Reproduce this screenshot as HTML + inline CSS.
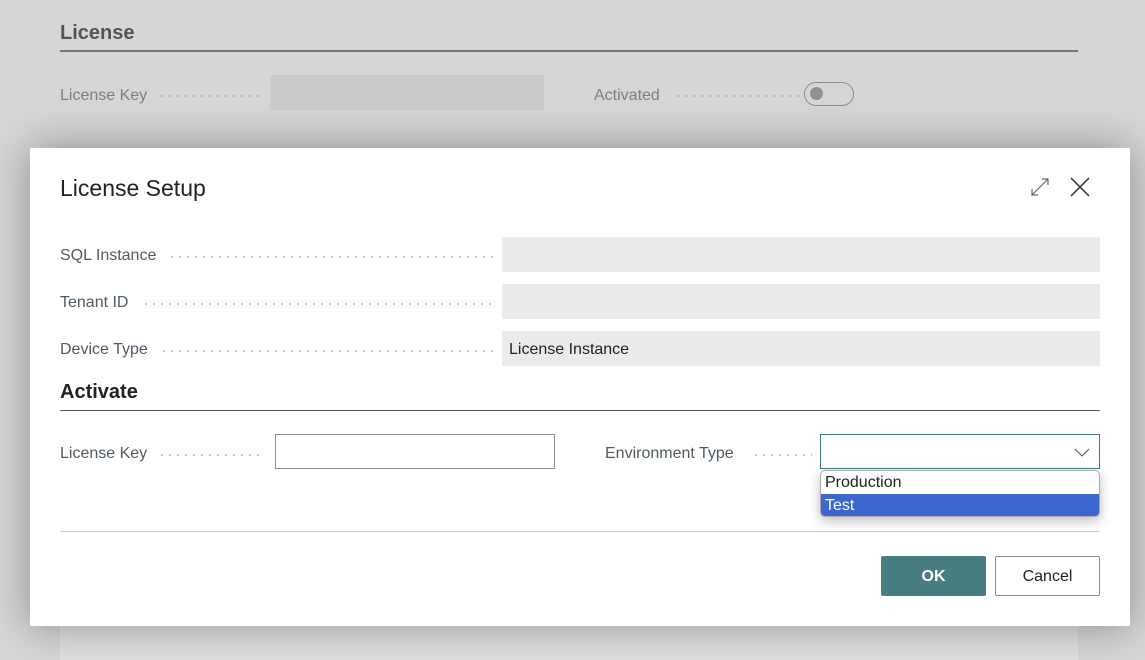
<!DOCTYPE html>
<html><head><style>
*{margin:0;padding:0;box-sizing:border-box}
body{width:1145px;height:660px;background:#d6d6d6;font-family:"Liberation Sans",sans-serif;position:relative;overflow:hidden}
.a{position:absolute}
.lbl{position:absolute;font-size:16px;color:#505a66;white-space:nowrap}
.dots{position:absolute;height:2px;background-image:radial-gradient(circle,#b8bcc2 0.9px,transparent 1.1px);background-size:8px 2px}
.bgl{color:#7a7f86}
.bgdots{background-image:radial-gradient(circle,#a9adb2 0.9px,transparent 1.1px)}
.field{position:absolute;background:#ebebec;height:35px;font-size:16px;color:#222;padding:10px 7px}
</style></head><body>
<div class="a" style="left:60px;top:626px;width:1018px;height:34px;background:#e0e0e0"></div>
<div class="a" style="left:60px;top:22px;font-size:20px;color:#50555c;font-weight:bold">License</div>
<div class="a" style="left:60px;top:50px;width:1018px;height:2px;background:#767880"></div>
<div class="lbl bgl" style="left:60px;top:87px">License Key</div>
<div class="dots bgdots" style="left:158px;top:95px;width:106px"></div>
<div class="a" style="left:270px;top:75px;width:274px;height:35px;background:#cbcbcb"></div>
<div class="lbl bgl" style="left:594px;top:87px">Activated</div>
<div class="dots bgdots" style="left:674px;top:95px;width:126px"></div>
<div class="a" style="left:804px;top:82px;width:50px;height:24px;border:1px solid #8a8d92;border-radius:12px"></div>
<div class="a" style="left:810px;top:87px;width:13px;height:13px;border-radius:50%;background:#8e9196"></div>

<div class="a" style="left:30px;top:148px;width:1100px;height:478px;background:#fff;box-shadow:0 0 40px rgba(0,0,0,.35)"></div>
<div class="a" style="left:60px;top:175px;font-size:23px;color:#222">License Setup</div>
<svg class="a" style="left:1028px;top:175px" width="24" height="24" viewBox="0 0 24 24"><path d="M4 20L20 4M14 4h6v6M4 14v6h6" fill="none" stroke="#666" stroke-width="1.2"/></svg>
<svg class="a" style="left:1068px;top:175px" width="24" height="24" viewBox="0 0 24 24"><path d="M3 3L21 21M21 3L3 21" fill="none" stroke="#444" stroke-width="1.6"/></svg>

<div class="lbl" style="left:60px;top:247px">SQL Instance</div>
<div class="dots" style="left:168px;top:256px;width:326px"></div>
<div class="field" style="left:502px;top:237px;width:598px"></div>
<div class="lbl" style="left:60px;top:294px">Tenant ID</div>
<div class="dots" style="left:142px;top:303px;width:352px"></div>
<div class="field" style="left:502px;top:284px;width:598px"></div>
<div class="lbl" style="left:60px;top:341px">Device Type</div>
<div class="dots" style="left:160px;top:350px;width:334px"></div>
<div class="field" style="left:502px;top:331px;width:598px">License Instance</div>

<div class="a" style="left:60px;top:381px;font-size:20px;font-weight:bold;color:#222">Activate</div>
<div class="a" style="left:60px;top:410px;width:1040px;height:1px;background:#555"></div>

<div class="lbl" style="left:60px;top:445px">License Key</div>
<div class="dots" style="left:158px;top:454px;width:106px"></div>
<div class="a" style="left:275px;top:434px;width:280px;height:35px;border:1px solid #8a8e96"></div>
<div class="lbl" style="left:605px;top:445px">Environment Type</div>
<div class="dots" style="left:752px;top:454px;width:60px"></div>
<div class="a" style="left:820px;top:434px;width:280px;height:35px;border:1px solid #3e7b80"></div>
<svg class="a" style="left:1074px;top:446px" width="16" height="12" viewBox="0 0 16 12"><path d="M1 3l7 7 7-7" fill="none" stroke="#555" stroke-width="1.1"/></svg>

<div class="a" style="left:820px;top:470px;width:280px;height:47px;background:#fff;border:1px solid #aaa;border-radius:5px;overflow:hidden;box-shadow:0 4px 12px rgba(0,0,0,.25)">
<div style="height:23px;font-size:16px;color:#222;padding:3px 4px">Production</div>
<div style="height:23px;font-size:16px;color:#fff;background:#3e66cf;padding:3px 4px">Test</div>
</div>

<div class="a" style="left:60px;top:531px;width:1040px;height:1px;background:#c8c8c8"></div>
<div class="a" style="left:881px;top:556px;width:105px;height:40px;background:#477c80;border-radius:2px;color:#fff;font-weight:bold;font-size:16px;text-align:center;line-height:42px">OK</div>
<div class="a" style="left:995px;top:556px;width:105px;height:40px;border:1px solid #8a8a8a;border-radius:2px;color:#222;font-size:16px;text-align:center;line-height:40px">Cancel</div>
</body></html>
